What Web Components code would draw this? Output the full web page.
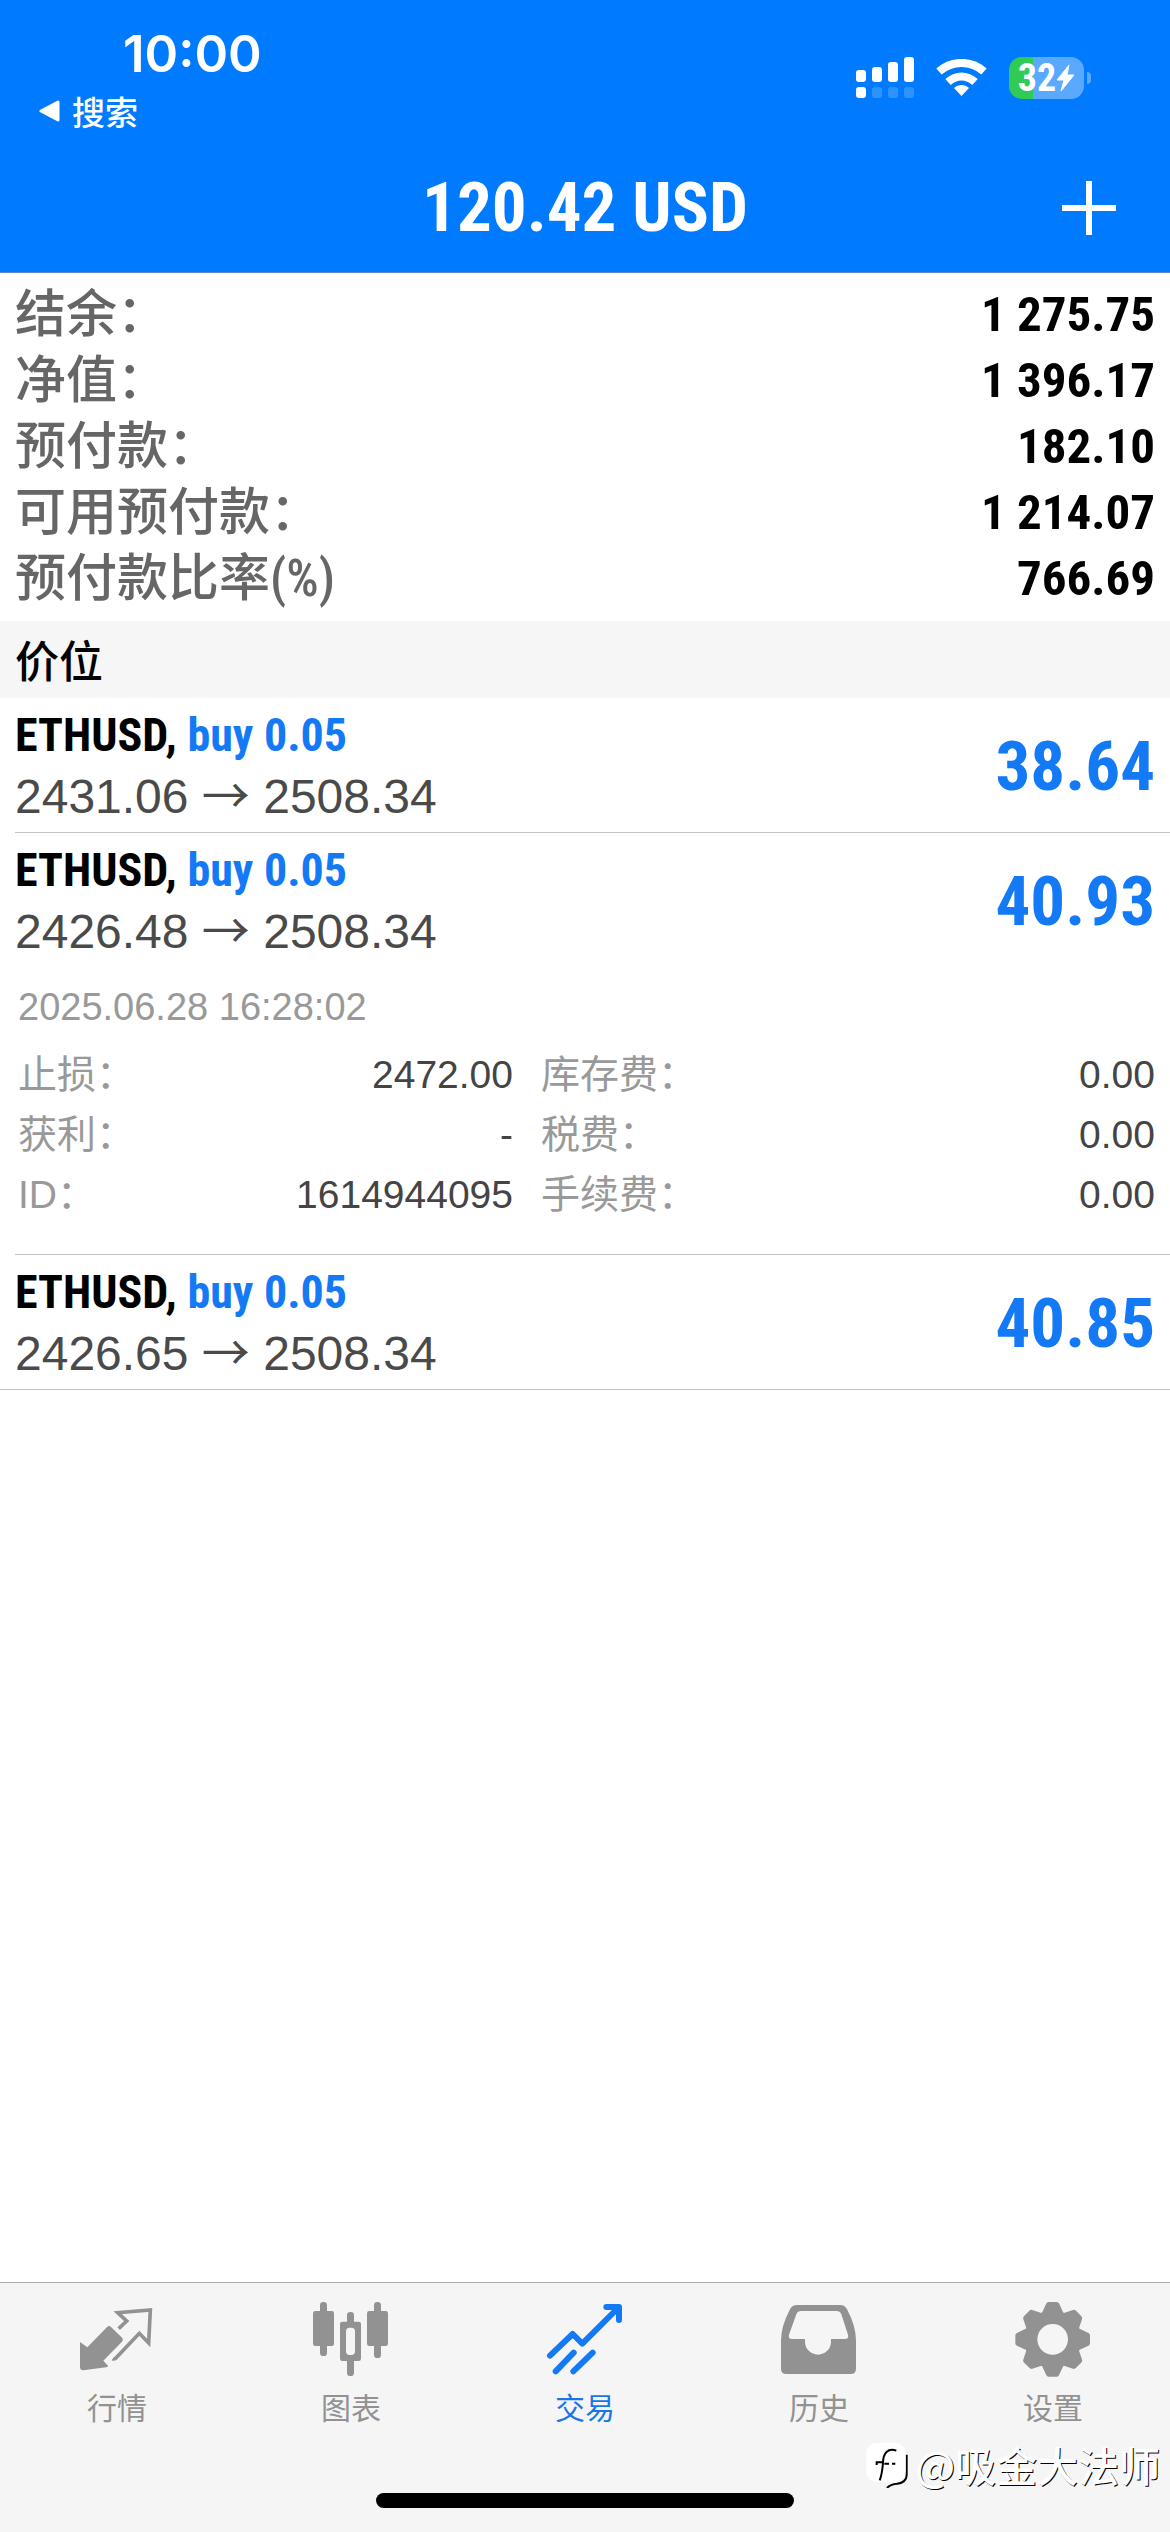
<!DOCTYPE html>
<html lang="zh-CN">
<head>
<meta charset="utf-8">
<meta name="viewport" content="width=device-width">
<title>交易</title>
<style>
  :root {
    --blue: #007aff;
    --trade-blue: #1479f5;
    --muted: #929292;
    --edge: 15px;
    --narrow: "Roboto Condensed", "Liberation Sans Narrow", "Noto Sans CJK SC", sans-serif;
    --sans: "Liberation Sans", "Noto Sans CJK SC", sans-serif;
    --cjk: "Noto Sans CJK SC", sans-serif;
  }
  body { margin: 0; background: #fff; font-family: var(--sans); color: #000; }
</style>
</head>
<body>
<trade-app></trade-app>

<script>
const define = (name, html, setup) => {
  const template = document.createElement('template');
  template.innerHTML = html;
  customElements.define(name, class extends HTMLElement {
    constructor() {
      super();
      this.attachShadow({ mode: 'open' }).append(template.content.cloneNode(true));
    }
    connectedCallback() { if (setup) setup(this, this.shadowRoot); }
  });
};

/* Clock, back link, signal, wifi and battery */
define('status-bar', `
<style>
  :host { display: flex; justify-content: space-between; align-items: flex-start; height: 119px; padding: 24px 79px 0 38px; color: #fff; }
  .left { display: flex; flex-direction: column; }
  time { font: 600 51px/60px Inter, sans-serif; padding-left: 85px; }
  a { display: flex; align-items: center; gap: 12px; color: inherit; text-decoration: none; font: 500 33px/54px var(--cjk); }
  .right { display: flex; align-items: center; gap: 22px; height: 108px; }
  svg { display: block; }
  .battery { display: flex; align-items: center; gap: 3px; }
  .cell { display: flex; align-items: center; justify-content: center; width: 75px; height: 42px; border-radius: 13px;
    background: linear-gradient(90deg, #30cb55 24px, #59a9ff 24px); font: 700 38px/42px var(--narrow); }
  .nub { width: 4px; height: 12px; border-radius: 0 4px 4px 0; background: #59a9ff; }
</style>
<div class="left">
  <time>10:00</time>
  <a href="#search"><svg width="22" height="22" viewBox="0 0 22 22" aria-hidden="true"><path d="M20 2v18L3 11z" fill="#fff" stroke="#fff" stroke-width="3" stroke-linejoin="round"/></svg><span>搜索</span></a>
</div>
<div class="right">
  <svg width="58" height="42" viewBox="0 0 58 42" fill="#fff" aria-label="signal">
    <rect x="0" y="13" width="10" height="12" rx="3"/><rect x="16" y="10" width="10" height="15" rx="3"/>
    <rect x="32" y="5" width="10" height="20" rx="3"/><rect x="48" y="0" width="10" height="25" rx="3"/>
    <rect x="0" y="30" width="10" height="11" rx="3"/>
    <g fill="#2f93ff"><rect x="16" y="30" width="10" height="11" rx="3"/><rect x="32" y="30" width="10" height="11" rx="3"/><rect x="48" y="30" width="10" height="11" rx="3"/></g>
  </svg>
  <svg width="51" height="38" viewBox="0 0 51 38" fill="none" stroke="#fff" stroke-width="8" aria-label="wifi">
    <path d="M3 12.500C16 1 35 1 48 12.500"/>
    <path d="M12 23C20 15.500 31 15.500 39 23"/>
    <path d="M25.500 37l-7.500-8c4-4 11-4 15 0z" fill="#fff" stroke="none"/>
  </svg>
  <div class="battery">
    <div class="cell"><span>32</span><svg width="19" height="28" viewBox="0 0 19 28" aria-hidden="true"><path d="M13 1L1 16h7L5 27 18 11h-7z" fill="#fff" stroke="#fff" stroke-linejoin="round"/></svg></div>
    <div class="nub"></div>
  </div>
</div>`);

/* Title bar with the floating profit and the add button */
define('title-bar', `
<style>
  :host { display: grid; grid-template-columns: 1fr auto 1fr; align-items: center; height: 129px; padding: 0 54px; color: #fff; border-bottom: 1px solid #5a87bd; }
  h1 { grid-column: 2; margin: 0; font: 700 69px/80px var(--narrow); white-space: nowrap; }
  button { justify-self: end; padding: 0; border: 0; background: none; color: inherit; }
  svg { display: block; }
</style>
<h1><slot></slot></h1>
<button type="button" aria-label="新订单"><svg width="54" height="54" viewBox="0 0 54 54"><path d="M27 0v54M0 27h54" stroke="#fff" stroke-width="6"/></svg></button>`);

define('account-row', `
<style>
  :host { display: flex; justify-content: space-between; align-items: center; height: 66px; }
  .label { color: #666; font: 500 51px/66px var(--narrow); }
  .value { font: 700 49px/66px var(--narrow); }
</style>
<span class="label"><slot name="label"></slot></span><span class="value"><slot></slot></span>`);

define('account-summary', `
<style>:host { display: block; padding: 9px var(--edge) 9px; }</style><slot></slot>`);

define('section-title', `
<style>
  :host { display: block; background: #f6f6f6; padding: 0 var(--edge); }
  h2 { margin: 0; font: 500 44px/77px var(--cjk); }
</style><h2><slot></slot></h2>`);

/* One open position; a details slot may follow the summary */
define('position-row', `
<style>
  :host { display: block; padding-left: var(--edge); }
  :host([last]) { padding-left: 0; }
  article { border-bottom: 1px solid #c4c4c4; padding-right: var(--edge); }
  :host([last]) article { padding-left: var(--edge); }
  .summary { display: flex; justify-content: space-between; align-items: center; box-sizing: border-box; height: 134px; padding-top: 4px; }
  .what { font: 700 46px/60px var(--narrow); }
  .side { color: var(--trade-blue); }
  .move { font: 400 48px/64px var(--sans); color: #4a4a4a; }
  .arrow { font-family: var(--cjk); line-height: 1; }
  .profit { color: var(--trade-blue); font: 700 69px/80px var(--narrow); }
</style>
<article>
  <div class="summary">
    <div>
      <div class="what"><span class="symbol"></span>, <span class="side"></span></div>
      <div class="move"><span class="from"></span> <span class="arrow">→</span> <span class="to"></span></div>
    </div>
    <div class="profit"><slot></slot></div>
  </div>
  <slot name="details"></slot>
</article>`, (el, root) => {
  for (const key of ['symbol', 'side', 'from', 'to'])
    root.querySelector('.' + key).textContent = el.getAttribute(key);
});

define('position-details', `
<style>
  :host { display: block; padding: 18px 0 29px 3px; }
  time { display: block; font: 400 38px/44px var(--sans); color: #999; margin-bottom: 16px; }
  .columns { display: grid; grid-template-columns: 495fr 614fr; gap: 28px; }
  dl { margin: 0; }
</style>
<time><slot name="time"></slot></time>
<div class="columns"><dl><slot name="left"></slot></dl><dl><slot name="right"></slot></dl></div>`);

define('detail-item', `
<style>
  :host { display: flex; justify-content: space-between; height: 60px; font: 400 39px/60px var(--sans); }
  .label { color: #999; }
  .value { color: #444; }
</style>
<span class="label"><slot name="label"></slot></span><span class="value"><slot></slot></span>`);

define('tab-item', `
<style>
  :host { flex: 1; display: block; color: var(--muted); }
  :host([selected]) { color: #1a76e8; }
  a { display: flex; flex-direction: column; align-items: center; gap: 6px; color: inherit; text-decoration: none; font: 400 30px/44px var(--cjk); }
</style>
<a><slot name="icon"></slot><span><slot></slot></span></a>`, (el, root) => {
  const link = root.querySelector('a');
  link.href = '#' + el.getAttribute('name');
  if (el.hasAttribute('selected')) link.setAttribute('aria-current', 'page');
});

define('tab-bar', `
<style>
  :host { display: block; position: relative; background: #f5f5f5; border-top: 1px solid #ababab; }
  nav { display: flex; padding-top: 17px; }
  .home { width: 418px; height: 15px; border-radius: 8px; background: #000; margin: 65px auto 24px; }
</style>
<nav><slot></slot></nav><div class="home"></div><slot name="overlay"></slot>`);

define('author-mark', `
<style>
  :host { position: absolute; right: 10px; bottom: 40px; display: flex; align-items: center; gap: 7px; color: #fff;
    font: 500 41px/56px var(--cjk); text-shadow: 1px 1px 0 #000; }
  svg { display: block; }
</style>
<svg width="42" height="48" viewBox="0 0 126 144" aria-hidden="true">
  <path d="M122 44v62c0 14-12 24-28 25-14 1-24 5-31 13" fill="none" stroke="#000" stroke-width="6"/>
  <rect x="1" y="8" width="118" height="118" rx="32" fill="#fff"/>
  <path d="M91 32C65 23 52 40 51 67H32v8M51 69c-2 22-4 38-10 52M55 71h14M78 71h10" fill="none" stroke="#000" stroke-width="6"/>
</svg>
<span><slot></slot></span>`);

define('trade-app', `
<style>
  :host { display: flex; flex-direction: column; min-height: 100vh; }
  header { background: var(--blue); }
  main { flex: 1; }
  svg { display: block; }
</style>
<header>
  <status-bar></status-bar>
  <title-bar>120.42 USD</title-bar>
</header>
<main>
  <account-summary>
    <account-row><span slot="label">结余：</span>1 275.75</account-row>
    <account-row><span slot="label">净值：</span>1 396.17</account-row>
    <account-row><span slot="label">预付款：</span>182.10</account-row>
    <account-row><span slot="label">可用预付款：</span>1 214.07</account-row>
    <account-row><span slot="label">预付款比率(%)</span>766.69</account-row>
  </account-summary>
  <section-title>价位</section-title>
  <position-row symbol="ETHUSD" side="buy 0.05" from="2431.06" to="2508.34">38.64</position-row>
  <position-row symbol="ETHUSD" side="buy 0.05" from="2426.48" to="2508.34">40.93<position-details slot="details">
      <span slot="time">2025.06.28 16:28:02</span>
      <detail-item slot="left"><span slot="label">止损：</span>2472.00</detail-item>
      <detail-item slot="left"><span slot="label">获利：</span>-</detail-item>
      <detail-item slot="left"><span slot="label">ID：</span>1614944095</detail-item>
      <detail-item slot="right"><span slot="label">库存费：</span>0.00</detail-item>
      <detail-item slot="right"><span slot="label">税费：</span>0.00</detail-item>
      <detail-item slot="right"><span slot="label">手续费：</span>0.00</detail-item>
    </position-details></position-row>
  <position-row last symbol="ETHUSD" side="buy 0.05" from="2426.65" to="2508.34">40.85</position-row>
</main>
<tab-bar>
  <tab-item name="quotes"><svg slot="icon" width="78" height="78" viewBox="234 90 234 234">
    <path d="M240 216l22 16 60-62q6-4 11 1l34 33q4 6-1 11l-56 57 14 15q0 5-6 5l-68 9q-10 0-10-9z" fill="currentColor"/>
    <path d="M356 176l24-23-27-25 98-8-5 99-28-29-71 75q-6 3-9 1" fill="none" stroke="currentColor" stroke-width="11"/>
  </svg>行情</tab-item>
  <tab-item name="charts"><svg slot="icon" width="78" height="78" viewBox="936 90 234 234">
    <g fill="currentColor"><rect x="939" y="123" width="63" height="105" rx="7"/><rect x="1101" y="123" width="63" height="105" rx="7"/>
    <rect x="960" y="96" width="21" height="162" rx="10"/><rect x="1122" y="96" width="21" height="168" rx="10"/>
    <rect x="1041" y="126" width="21" height="192" rx="10"/><rect x="1020" y="155" width="63" height="118" rx="7"/></g>
    <rect x="1038" y="173" width="27" height="82" rx="11" fill="#f5f5f5"/>
  </svg>图表</tab-item>
  <tab-item name="trade" selected><svg slot="icon" width="78" height="78" viewBox="198 90 234 234" fill="none" stroke="#1479f5" stroke-width="18" stroke-linecap="round" stroke-linejoin="round">
    <path d="M210 257l68-65 29 29L414 114M379 111h38v39M227 304l54-56M280 304l58-56"/>
  </svg>交易</tab-item>
  <tab-item name="history"><svg slot="icon" width="78" height="78" viewBox="0 90 234 234">
    <path fill="currentColor" fill-rule="evenodd" d="M52 105H180q15 0 21 13 27 51 27 94v84q0 16-16 16H19q-16 0-16-16v-84q0-43 27-94 6-13 22-13zM64 123q-11 0-15 10L27 194q-3 13 9 13H75v8a39 39 0 0 0 78 0v-8h42q12 0 9-13l-20-61q-4-10-15-10z"/>
  </svg>历史</tab-item>
  <tab-item name="settings"><svg slot="icon" width="78" height="78" viewBox="702 90 234 234">
    <g fill="currentColor" stroke="currentColor" stroke-linejoin="round"><circle cx="818" cy="208" r="66" fill="none" stroke-width="40"/>
    <g stroke-width="16"><path d="M806 104h24l13 28h-50z"/><path d="M806 312h24l13-28h-50z"/><path d="M714 196v24l28 13v-50zM922 196v24l-28 13v-50z"/>
    <g transform="rotate(45 818 208)"><path d="M806 106h24l13 26h-50zM806 310h24l13-26h-50zM716 196v24l26 13v-50zM920 196v24l-26 13v-50z"/></g></g></g>
  </svg>设置</tab-item>
  <author-mark slot="overlay">@吸金大法师</author-mark>
</tab-bar>`);
</script>
</body>
</html>
